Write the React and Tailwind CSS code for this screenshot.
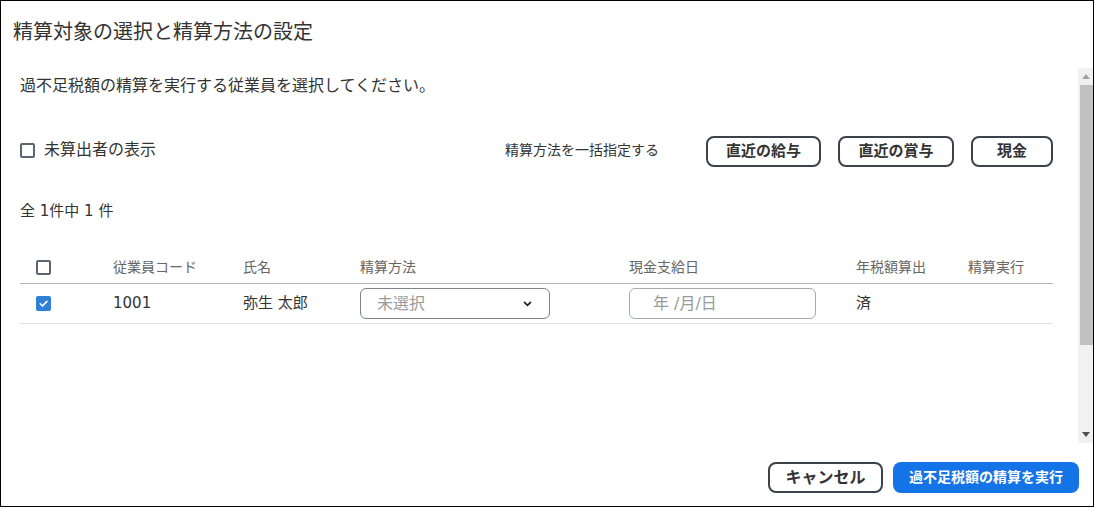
import React, { useState } from "react";

const cols = "grid grid-cols-[93px_130px_117px_269px_227px_112px_1fr]";

function Box({ checked, onClick }) {
  return checked ? (
    <button
      onClick={onClick}
      className="w-[15px] h-[15px] rounded-[2px] bg-[#2f80d8] flex items-center justify-center"
    >
      <svg width="11" height="11" viewBox="0 0 12 12" fill="none">
        <path d="M2.5 6.3l2.4 2.4 4.8-5" stroke="white" strokeWidth="1.8" strokeLinecap="round" strokeLinejoin="round" />
      </svg>
    </button>
  ) : (
    <button
      onClick={onClick}
      className="w-[15px] h-[15px] rounded-[2px] border-2 border-[#5d6670] bg-white"
    />
  );
}

// static look of the classic scrollbar in the screenshot
function ScrollBar() {
  return (
    <div className="w-[15px] bg-[#f1f1f1] flex flex-col">
      <div className="h-[17px] flex items-center justify-center">
        <svg width="8" height="5" viewBox="0 0 8 5">
          <path d="M0 5L4 0l4 5z" fill="#a3a3a3" />
        </svg>
      </div>
      <div className="h-[260px] ml-[2px] bg-[#c1c1c1]" />
      <div className="flex-1" />
      <div className="h-[17px] flex items-center justify-center">
        <svg width="8" height="5" viewBox="0 0 8 5">
          <path d="M0 0l4 5 4-5z" fill="#505050" />
        </svg>
      </div>
    </div>
  );
}

function App() {
  const [showUncalc, setShowUncalc] = useState(false);
  const [all, setAll] = useState(false);
  const [row, setRow] = useState(true);

  return (
    <div className="w-[1094px] h-[507px] border border-black bg-white flex flex-col text-[#333] font-['DejaVu_Sans','Noto_Sans_CJK_JP',sans-serif]">
      <div className="h-[67px] flex items-center pb-[5px] pl-3 text-[20px] leading-none">
        精算対象の選択と精算方法の設定
      </div>

      <div className="h-[375px] flex">
        <div className="flex-1 overflow-hidden pl-[19px] pr-[25px] pt-[6px]">
          <p className="text-[16px] leading-[24px]">
            過不足税額の精算を実行する従業員を選択してください。
          </p>

          <div className="mt-[38px] h-[31px] flex items-center justify-between">
            <label className="flex items-center gap-[9px] text-[16px] pb-[3px]">
              <Box checked={showUncalc} onClick={() => setShowUncalc(!showUncalc)} />
              未算出者の表示
            </label>
            <div className="flex items-center">
              <span className="text-[14px] mr-[47px] pb-[3px]">精算方法を一括指定する</span>
              <button className="w-[115px] h-[31px] border-2 border-[#3b424a] rounded-[8px] text-[15px] font-bold">
                直近の給与
              </button>
              <button className="ml-[17px] w-[116px] h-[31px] border-2 border-[#3b424a] rounded-[8px] text-[15px] font-bold">
                直近の賞与
              </button>
              <button className="ml-[17px] w-[82px] h-[31px] border-2 border-[#3b424a] rounded-[8px] text-[15px] font-bold">
                現金
              </button>
            </div>
          </div>

          <p className="mt-[33px] text-[15px] leading-[22px]">全 1件中 1 件</p>

          <div className="mt-[29px]">
            <div className={`${cols} h-[33px] items-center border-b border-[#b3b3b3] text-[14px] text-[#666]`}>
              <div className="pl-4 flex items-center">
                <Box checked={all} onClick={() => setAll(!all)} />
              </div>
              <div>従業員コード</div>
              <div>氏名</div>
              <div>精算方法</div>
              <div>現金支給日</div>
              <div>年税額算出</div>
              <div>精算実行</div>
            </div>
            <div className={`${cols} h-[40px] items-center border-b border-[#e2e2e2] text-[15px]`}>
              <div className="pl-4 flex items-center">
                <Box checked={row} onClick={() => setRow(!row)} />
              </div>
              <div>1001</div>
              <div>弥生 太郎</div>
              <div>
                <div className="w-[190px] h-[31px] border border-[#7b838b] rounded-[6px] flex items-center justify-between pl-4 pr-[17px] text-[16px] text-[#9a9a9a]">
                  <span>未選択</span>
                  <svg width="9" height="6" viewBox="0 0 10 7" fill="none">
                    <path d="M1.5 1.5L5 5l3.5-3.5" stroke="#222" strokeWidth="2" strokeLinecap="round" strokeLinejoin="round" />
                  </svg>
                </div>
              </div>
              <div>
                <div className="w-[187px] h-[31px] border border-[#a4abb2] rounded-[6px] flex items-center pl-[23px] text-[16px] text-[#9a9a9a]">
                  年 /月/日
                </div>
              </div>
              <div>済</div>
              <div></div>
            </div>
          </div>
        </div>
        <ScrollBar />
      </div>

      <div className="flex-1 flex items-start justify-end pt-[19px] pr-[14px] gap-[10px]">
        <button className="w-[115px] h-[31px] border-2 border-[#3b424a] rounded-[8px] text-[16px] font-bold text-[#333]">
          キャンセル
        </button>
        <button className="w-[186px] h-[31px] rounded-[8px] bg-[#1473e6] text-white text-[14px] font-bold">
          過不足税額の精算を実行
        </button>
      </div>
    </div>
  );
}

export default App;
